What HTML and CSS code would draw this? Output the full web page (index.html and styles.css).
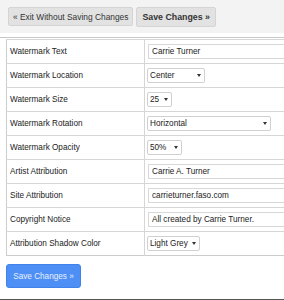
FILE: index.html
```html
<!DOCTYPE html>
<html lang="en">
<head>
    <meta charset="UTF-8">
    <title>Watermark Settings</title>
    <link rel="stylesheet" href="styles.css">
</head>
<body>
    <div class="toolbar">
        <button type="button" class="tb-btn">« Exit Without Saving Changes</button>
        <button type="button" class="tb-btn tb-save">Save Changes »</button>
    </div>
    <div class="rule"></div>

    <form class="settings">
        <table>
            <tr>
                <td class="lbl">Watermark Text</td>
                <td><input type="text" value="Carrie Turner"></td>
            </tr>
            <tr>
                <td class="lbl">Watermark Location</td>
                <td><span class="sel w-center"><select><option>Center</option></select></span></td>
            </tr>
            <tr>
                <td class="lbl">Watermark Size</td>
                <td><span class="sel w-size"><select><option>25</option></select></span></td>
            </tr>
            <tr>
                <td class="lbl">Watermark Rotation</td>
                <td><span class="sel w-rot"><select><option>Horizontal</option></select></span></td>
            </tr>
            <tr>
                <td class="lbl">Watermark Opacity</td>
                <td><span class="sel w-op"><select><option>50%</option></select></span></td>
            </tr>
            <tr>
                <td class="lbl">Artist Attribution</td>
                <td><input type="text" value="Carrie A. Turner"></td>
            </tr>
            <tr>
                <td class="lbl">Site Attribution</td>
                <td><input type="text" value="carrieturner.faso.com"></td>
            </tr>
            <tr>
                <td class="lbl">Copyright Notice</td>
                <td><input type="text" value="All created by Carrie Turner."></td>
            </tr>
            <tr>
                <td class="lbl">Attribution Shadow Color</td>
                <td><span class="sel w-shadow"><select><option>Light Grey</option></select></span></td>
            </tr>
        </table>
        <button type="button" class="save-btn">Save Changes »</button>
    </form>
</body>
</html>
```

FILE: styles.css
```css
body {
    font-family: "Liberation Sans", Arial, sans-serif;
    font-size: 8.2px;
    color: #222;
    margin: 0;
    height: 299px;
    border-bottom: 1px solid #555;
    overflow: hidden;
}
.toolbar {
    background: #f3f3f3;
    height: 33px;
    padding: 7px 0 0 8px;
    box-sizing: border-box;
    display: flex;
    gap: 3px;
    align-items: flex-start;
}
.tb-btn {
    font-family: inherit;
    font-size: 8.4px;
    color: #333;
    background: #e2e2e2;
    border: 1px solid #d4d4d4;
    border-radius: 2px;
    height: 19px;
    padding: 0 4px;
}
.tb-save {
    font-weight: bold;
    font-size: 8.8px;
    height: 20px;
    padding: 0 5px;
}
.rule {
    margin: 4px 0 0 0;
    height: 1px;
    background: #c8c8c8;
}
.settings {
    padding: 1px 0 0 6px;
    overflow: hidden;
}
table {
    border-collapse: collapse;
    width: 300px;
    border: 1px solid #ccc;
}
td {
    border-top: 1px solid #d6d6d6;
    height: 23px;
    padding: 0 2px;
    vertical-align: middle;
}
td.lbl {
    width: 132px;
    padding-left: 3px;
    border-right: 1px solid #d6d6d6;
}
input {
    font-family: inherit;
    font-size: 8.2px;
    color: #222;
    width: 100%;
    box-sizing: border-box;
    height: 15px;
    border: 1px solid #d8d8d8;
    padding: 0 3px;
    margin: 0 0 0 1px;
}
.sel {
    display: inline-block;
    position: relative;
    vertical-align: middle;
}
.sel select {
    appearance: none;
    -webkit-appearance: none;
    font-family: inherit;
    font-size: 8.2px;
    color: #222;
    background: #fff;
    border: 1px solid #d0d0d0;
    border-radius: 2px;
    height: 15px;
    padding: 0 9px 0 2px;
    width: 100%;
}
.sel::after {
    content: "";
    position: absolute;
    right: 4px;
    top: 6px;
    border-left: 2.5px solid transparent;
    border-right: 2.5px solid transparent;
    border-top: 3px solid #333;
    pointer-events: none;
}
.w-center { width: 58px; }
.w-size { width: 25px; }
.w-rot { width: 124px; }
.w-op { width: 35px; }
.w-shadow { width: 53px; }
.save-btn {
    display: block;
    margin-top: 8px;
    font-family: inherit;
    font-size: 8.2px;
    color: #e8f0ff;
    background: #4d8ff5;
    border: 1px solid #3f82ea;
    border-radius: 3px;
    width: 75px;
    height: 24px;
    padding: 0;
}
```
